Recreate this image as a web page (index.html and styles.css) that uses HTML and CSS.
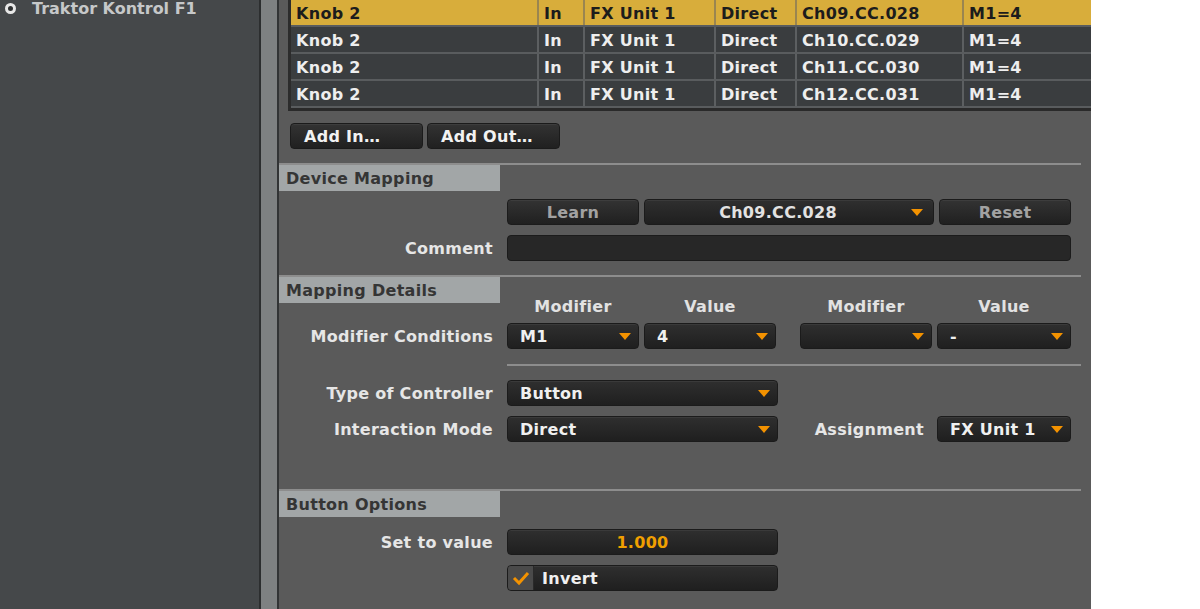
FILE: index.html
```html
<!DOCTYPE html>
<html lang="en">
<head>
<meta charset="UTF-8">
<title>Controller Manager</title>
<link rel="stylesheet" href="styles.css">
</head>
<body>
<div class="app">
    <aside class="sidebar">
        <div class="device"><span class="dot"></span>Traktor Kontrol F1</div>
    </aside>
    <div class="splitter"></div>
    <main class="editor">
        <div class="assign-table">
            <div class="row selected">
                <div class="cell c-name">Knob 2</div><div class="cell c-io">In</div><div class="cell c-target">FX Unit 1</div><div class="cell c-mode">Direct</div><div class="cell c-ctrl">Ch09.CC.028</div><div class="cell c-cond">M1=4</div>
            </div>
            <div class="row">
                <div class="cell c-name">Knob 2</div><div class="cell c-io">In</div><div class="cell c-target">FX Unit 1</div><div class="cell c-mode">Direct</div><div class="cell c-ctrl">Ch10.CC.029</div><div class="cell c-cond">M1=4</div>
            </div>
            <div class="row">
                <div class="cell c-name">Knob 2</div><div class="cell c-io">In</div><div class="cell c-target">FX Unit 1</div><div class="cell c-mode">Direct</div><div class="cell c-ctrl">Ch11.CC.030</div><div class="cell c-cond">M1=4</div>
            </div>
            <div class="row">
                <div class="cell c-name">Knob 2</div><div class="cell c-io">In</div><div class="cell c-target">FX Unit 1</div><div class="cell c-mode">Direct</div><div class="cell c-ctrl">Ch12.CC.031</div><div class="cell c-cond">M1=4</div>
            </div>
        </div>

        <div class="add-buttons">
            <button class="btn">Add In…</button>
            <button class="btn">Add Out…</button>
        </div>

        <section class="group">
            <div class="group-head"><h2 class="group-title">Device Mapping</h2></div>
            <div class="field first">
                <span class="field-label"></span>
                <div class="controls">
                    <button class="btn btn-dim w-small">Learn</button>
                    <div class="select centered w-wide"><span>Ch09.CC.028</span></div>
                    <button class="btn btn-dim w-small">Reset</button>
                </div>
            </div>
            <div class="field">
                <span class="field-label">Comment</span>
                <div class="text-input w-full"></div>
            </div>
        </section>

        <section class="group">
            <div class="group-head">
                <h2 class="group-title">Mapping Details</h2>
                <div class="quad col-heads">
                    <div class="pair"><span class="w-small">Modifier</span><span class="w-small">Value</span></div>
                    <div class="pair"><span class="w-small">Modifier</span><span class="w-last">Value</span></div>
                </div>
            </div>
            <div class="field tight">
                <span class="field-label">Modifier Conditions</span>
                <div class="quad">
                    <div class="pair">
                        <div class="select w-small"><span>M1</span></div>
                        <div class="select w-small"><span>4</span></div>
                    </div>
                    <div class="pair">
                        <div class="select w-small"><span></span></div>
                        <div class="select w-last"><span>-</span></div>
                    </div>
                </div>
            </div>
            <hr class="inner-rule">
            <div class="field loose">
                <span class="field-label">Type of Controller</span>
                <div class="select w-half"><span>Button</span></div>
            </div>
            <div class="field">
                <span class="field-label">Interaction Mode</span>
                <div class="select w-half"><span>Direct</span></div>
                <span class="sub-label">Assignment</span>
                <div class="select w-last"><span>FX Unit 1</span></div>
            </div>
        </section>

        <section class="group last">
            <div class="group-head"><h2 class="group-title">Button Options</h2></div>
            <div class="field first-12">
                <span class="field-label">Set to value</span>
                <div class="value-box w-half">1.000</div>
            </div>
            <div class="field">
                <span class="field-label"></span>
                <div class="checkbox w-half">
                    <span class="check">
                        <svg width="18" height="16" viewBox="0 0 18 16"><path d="M2 8 L7 13 L16 3" fill="none" stroke="#f39200" stroke-width="3"/></svg>
                    </span>
                    <span>Invert</span>
                </div>
            </div>
        </section>
    </main>
</div>
</body>
</html>
```

FILE: styles.css
```css
body {
    margin: 0;
    background: #fff;
    font-family: "DejaVu Sans", "Liberation Sans", sans-serif;
    font-size: 16px;
    font-weight: bold;
    letter-spacing: 0.3px;
}
.app {
    display: flex;
    height: 609px;
    overflow: hidden;
}

/* left device list */
.sidebar {
    width: 259px;
    background: #45484a;
}
.device {
    display: flex;
    align-items: center;
    margin-top: -3px;
    color: #c6c8c9;
    height: 22px;
    letter-spacing: 0;
}
.dot {
    width: 5px;
    height: 5px;
    border: 3px solid #e8e8e8;
    border-radius: 50%;
    background: #2e3031;
    margin: 0 16px 0 5px;
}
.splitter {
    width: 16px;
    background: #7e8182;
    border-left: 2px solid #2c2e2f;
    border-right: 2px solid #323435;
}

/* main editor */
.editor {
    width: 812px;
    background: #5a5a5a;
}
.assign-table {
    margin-left: 9px;
    border-left: 3px solid #2c2c2c;
    border-bottom: 3px solid #2a2a2a;
    background: #3a3d3f;
}
.row {
    display: flex;
    height: 25px;
    border-bottom: 2px solid #595c5e;
    color: #eeeeee;
}
.row.selected {
    background: #d8ad3b;
    color: #1c1c1c;
}
.cell {
    display: flex;
    align-items: center;
    padding: 2px 0 0 5px;
    border-left: 2px solid #5c5f61;
    box-sizing: border-box;
    white-space: nowrap;
}
.row.selected .cell {
    border-left-color: #9a8550;
}
.c-name { width: 246px; border-left: none; }
.c-io { width: 46px; }
.c-target { width: 131px; }
.c-mode { width: 81px; }
.c-ctrl { width: 167px; }
.c-cond { flex: 1; }

.add-buttons {
    display: flex;
    gap: 4px;
    margin: 12px 0 0 11px;
}
.btn {
    height: 26px;
    width: 133px;
    font: inherit;
    letter-spacing: inherit;
    color: #f2f2f2;
    text-align: left;
    padding: 1px 0 0 13px;
    border: 1px solid #1b1b1b;
    border-radius: 4px;
    background: linear-gradient(#333333, #202020);
    box-shadow: inset 0 1px 0 #3d3d3d;
}
.btn-dim {
    color: #a2a2a2;
    text-align: center;
    padding-left: 0;
}

/* sections */
.group {
    margin: 14px 10px 0 0;
    border-top: 2px solid #8d8d8d;
}
.group.last {
    margin-top: 47px;
}
.group-head {
    display: flex;
    align-items: flex-start;
}
.group-title {
    margin: 0;
    width: 214px;
    height: 26px;
    padding-left: 7px;
    font-size: 16px;
    line-height: 27px;
    background: #a2a6a7;
    color: #353535;
}
.col-heads {
    margin: 19px 0 0 7px;
    color: #e2e2e2;
    line-height: 21px;
}
.col-heads span {
    text-align: center;
}
.field {
    display: flex;
    align-items: center;
    margin-top: 10px;
}
.field.first { margin-top: 8px; }
.field.first-12 { margin-top: 12px; }
.field.tight { margin-top: 6px; }
.field.loose { margin-top: 14px; }
.field-label {
    width: 214px;
    margin-right: 14px;
    text-align: right;
    color: #e6e6e6;
}
.sub-label {
    width: 146px;
    margin-right: 13px;
    text-align: right;
    color: #e6e6e6;
}
.controls {
    display: flex;
    gap: 5px;
}
.quad {
    display: flex;
    gap: 24px;
}
.pair {
    display: flex;
    gap: 5px;
}
.inner-rule {
    margin: 15px 0 0 228px;
    border: none;
    border-top: 2px solid #8d8d8d;
    height: 0;
}

.w-small { width: 132px; }
.w-last { width: 134px; }
.w-wide { width: 290px; }
.w-half { width: 271px; }
.w-full { width: 564px; }

/* dark widgets */
.select, .text-input, .value-box, .checkbox {
    height: 26px;
    box-sizing: border-box;
    border: 1px solid #1b1b1b;
    border-radius: 4px;
    background: linear-gradient(#2f2f2f, #1f1f1f);
    box-shadow: inset 0 1px 0 #3a3a3a;
    color: #f0f0f0;
    display: flex;
    align-items: center;
}
.select {
    padding: 1px 0 0 12px;
}
.select::after {
    content: "";
    margin: 0 7px 0 auto;
    border-left: 6px solid transparent;
    border-right: 6px solid transparent;
    border-top: 7px solid #f39200;
}
.select.centered span {
    flex: 1;
    text-align: center;
    color: #e2e2e2;
}
.select.centered {
    padding-left: 0;
}
.select.centered::after {
    margin-left: 0;
    margin-right: 10px;
}
.text-input {
    background: #272727;
    box-shadow: none;
}
.value-box {
    justify-content: center;
    color: #f0a000;
    padding-top: 1px;
}
.checkbox {
    overflow: hidden;
}
.check {
    width: 25px;
    height: 24px;
    display: flex;
    align-items: center;
    justify-content: center;
    background: #4a4a4a;
    border-right: 1px solid #2a2a2a;
    margin-right: 8px;
}
```
